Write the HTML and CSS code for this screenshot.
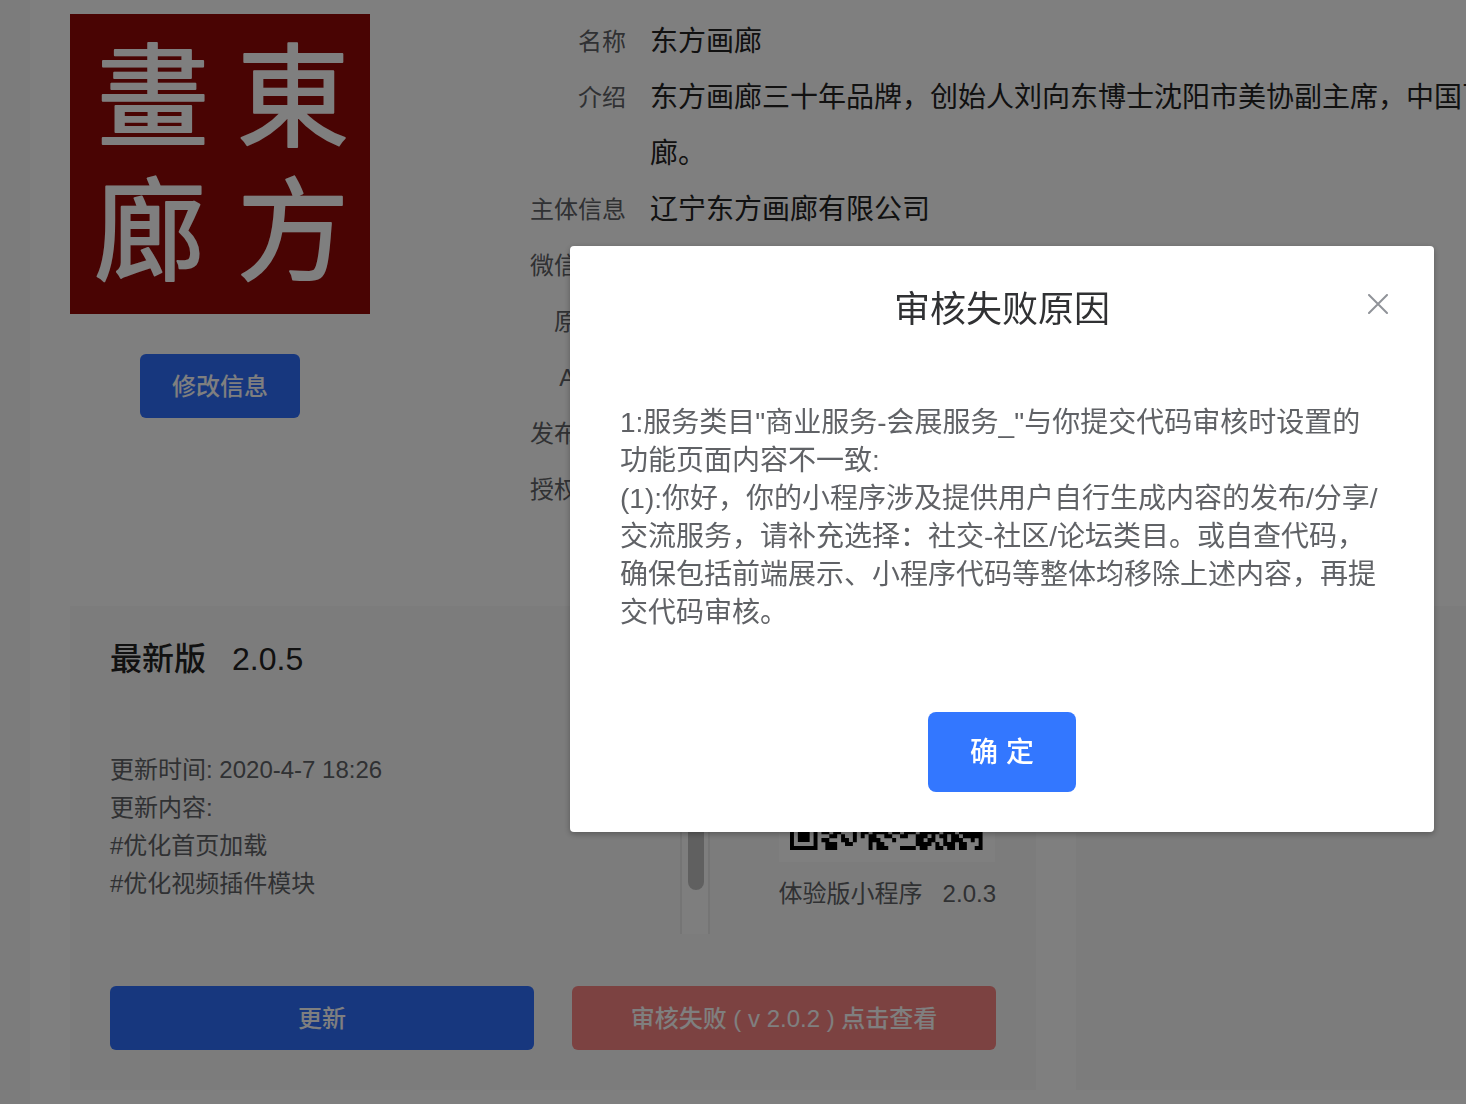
FILE: index.html
```html
<!DOCTYPE html>
<html lang="zh-CN">
<head>
<meta charset="utf-8">
<meta name="viewport" content="width=device-width, initial-scale=1">
<title>东方画廊</title>
<link rel="stylesheet" href="styles.css">
</head>
<body>
<main class="page">
  <section class="profile">
    <div class="profile-side">
      <svg class="logo" viewBox="0 0 300 300" role="img" aria-label="東方畫廊">
        <rect width="300" height="300" fill="#930906"/>
        <g class="logo-text">
          <text x="83" y="124">畫</text>
          <text x="223" y="124">東</text>
          <text x="80" y="258">廊</text>
          <text x="223" y="258">方</text>
        </g>
      </svg>
      <button class="btn btn-primary btn-edit" type="button">修改信息</button>
    </div>
    <dl class="info">
      <dt>名称</dt><dd>东方画廊</dd>
      <dt>介绍</dt><dd>东方画廊三十年品牌，创始人刘向东博士沈阳市美协副主席，中国百<br>廊。</dd>
      <dt>主体信息</dt><dd>辽宁东方画廊有限公司</dd>
      <dt>微信认证</dt><dd></dd>
      <dt>原始ID</dt><dd></dd>
      <dt>AppID</dt><dd></dd>
      <dt>发布状态</dt><dd></dd>
      <dt>授权状态</dt><dd></dd>
    </dl>
  </section>
  <section class="cards">
    <article class="card">
      <h2 class="card-title"><strong>最新版</strong><span>2.0.5</span></h2>
      <div class="card-body">
        <div class="notes">
          <p>更新时间: 2020-4-7 18:26</p>
          <p>更新内容:</p>
          <p>#优化首页加载</p>
          <p>#优化视频插件模块</p>
        </div>
        <div class="track"><div class="thumb"></div></div>
        <figure class="trial">
          <svg class="qr" viewBox="0 36 216 180" role="img" aria-label="体验版小程序二维码">
            <g transform="translate(11 11.4) scale(3.93)">
              <path d="M.5 42.5h6v6h-6zM42.5.5h6v6h-6z" fill="none" stroke="#000"/>
              <path d="M2 44h3v3h-3zM44 2h3v3h-3z"/>
              <path fill="none" stroke="#000" stroke-width="1.04" d="M8 44.5h2m1 0h2m3 0h1m1 0h2m1 0h4m1 0h2m1 0h3m1 0h5m1 0h3m1 0h6
                M10 45.5h2m1 0h1m2 0h1m1 0h1m1 0h2m2 0h2m2 0h2m2 0h3m1 0h1m1 0h2m1 0h2m1 0h5
                M8 46.5h2m3 0h2m1 0h1m3 0h3m3 0h1m5 0h2m1 0h2m2 0h1m1 0h3m2 0h1m1 0h1
                M9 47.5h3m2 0h2m4 0h1m1 0h2m8 0h4m1 0h1m1 0h3m1 0h2m3 0h1
                M9 48.5h3m8 0h1m1 0h3m3 0h4m1 0h2m2 0h2m1 0h2m1 0h2m2 0h2"/>
            </g>
          </svg>
          <figcaption><span>体验版小程序</span><span>2.0.3</span></figcaption>
        </figure>
      </div>
      <div class="card-actions">
        <button class="btn btn-primary" type="button">更新</button>
        <button class="btn btn-danger" type="button">审核失败 ( v 2.0.2 ) 点击查看</button>
      </div>
    </article>
    <article class="card"></article>
  </section>
</main>
<div class="overlay">
  <div class="dialog" role="dialog" aria-modal="true" aria-labelledby="dialog-title">
    <header class="dialog-head">
      <h1 id="dialog-title">审核失败原因</h1>
      <button class="close" type="button" aria-label="关闭"><svg viewBox="0 0 20 20"><path d="M1 1 19 19M19 1 1 19" fill="none" stroke="#909399" stroke-width="2" stroke-linecap="round"/></svg></button>
    </header>
    <p class="dialog-text">1:服务类目"商业服务-会展服务_"与你提交代码审核时设置的功能页面内容不一致:<br>(1):你好，你的小程序涉及提供用户自行生成内容的发布/分享/交流服务，请补充选择：社交-社区/论坛类目。或自查代码，确保包括前端展示、小程序代码等整体均移除上述内容，再提交代码审核。</p>
    <footer class="dialog-foot"><button class="btn btn-confirm" type="button">确 定</button></footer>
  </div>
</div>
</body>
</html>
```
FILE: styles.css
```css
* { box-sizing: border-box; }
body {
  margin: 0;
  min-height: 100vh;
  overflow: hidden;
  background: #f8f8f8;
  color: #606266;
  font-family: "Liberation Sans", "Noto Sans CJK SC", sans-serif;
  font-size: 24px;
}
h1, h2, p, dl, dd, figure { margin: 0; }
.page {
  min-height: 100vh;
  margin-left: 30px;
  padding: 14px 0 14px 40px;
  background: #fff;
  overflow: hidden;
}
.profile { display: flex; gap: 160px; height: 592px; }
.profile-side {
  display: flex;
  flex: none;
  flex-direction: column;
  align-items: center;
  gap: 40px;
  width: 300px;
}
.logo { display: block; width: 300px; height: 300px; }
.logo-text {
  fill: #fff;
  stroke: #fff;
  stroke-width: 2px;
  stroke-linejoin: round;
  font-family: "Noto Sans CJK TC", sans-serif;
  font-size: 112px;
  font-weight: 400;
  text-anchor: middle;
}
.info {
  display: grid;
  flex: 1;
  grid-template-columns: 96px 1fr;
  column-gap: 24px;
  align-content: start;
  line-height: 56px;
}
.info dt { text-align: right; white-space: nowrap; }
.info dd { color: #222; font-size: 28px; white-space: nowrap; }
.btn {
  height: 64px;
  padding: 0 32px 4px;
  border: 0;
  border-radius: 6px;
  color: #fff;
  font: 500 24px "Liberation Sans", "Noto Sans CJK SC", sans-serif;
}
.btn-primary { background: #2e6ffd; }
.btn-danger { padding: 0 0 4px; background: #f98583; }
.cards { display: flex; gap: 40px; }
.card {
  flex: none;
  width: 966px;
  padding: 31px 40px 40px;
  background: #f9f9f9;
}
.card-title {
  display: flex;
  gap: 26px;
  color: #222;
  font-size: 32px;
  font-weight: 400;
  line-height: 44px;
}
.card-title strong { font-weight: 500; }
.card-body { display: flex; justify-content: space-between; height: 253px; }
.notes { width: 570px; padding-top: 70px; line-height: 38px; }
.track {
  width: 30px;
  margin-right: auto;
  padding: 0 6px;
  border: solid #eaeaea;
  border-width: 0 2px;
  background: #fcfcfc;
}
.thumb { width: 16px; height: 209px; border-radius: 8px; background: #c1c1c1; }
.trial { display: flex; flex-direction: column; gap: 12px; padding-top: 1px; }
.qr { display: block; width: 216px; height: 180px; background: #fff; }
.trial figcaption { display: flex; gap: 20px; line-height: 40px; white-space: nowrap; }
.card-actions { display: grid; grid-template-columns: 1fr 1fr; gap: 38px; margin-top: 52px; }
.overlay {
  position: fixed;
  inset: 0;
  display: flex;
  align-items: flex-start;
  justify-content: flex-end;
  padding: 246px 32px 32px;
  background: rgba(0, 0, 0, 0.5);
}
.dialog {
  width: 864px;
  max-width: 100%;
  padding: 40px 46px;
  border-radius: 4px;
  background: #fff;
  box-shadow: 0 2px 6px rgba(0, 0, 0, 0.3);
}
.dialog-head { display: grid; grid-template-columns: 20px 1fr 20px; align-items: start; }
.dialog-head h1 {
  grid-column: 2;
  color: #303133;
  font-size: 36px;
  font-weight: 400;
  line-height: 48px;
  text-align: center;
}
.close { width: 20px; height: 20px; margin-top: 8px; padding: 0; border: 0; background: none; }
.close svg { display: block; width: 20px; height: 20px; }
.dialog-text { padding: 70px 0 80px 4px; font-size: 28px; line-height: 38px; }
.dialog-foot { display: flex; justify-content: center; }
.btn-confirm { width: 148px; height: 80px; border-radius: 8px; background: #3377ff; font-size: 28px; }
```
